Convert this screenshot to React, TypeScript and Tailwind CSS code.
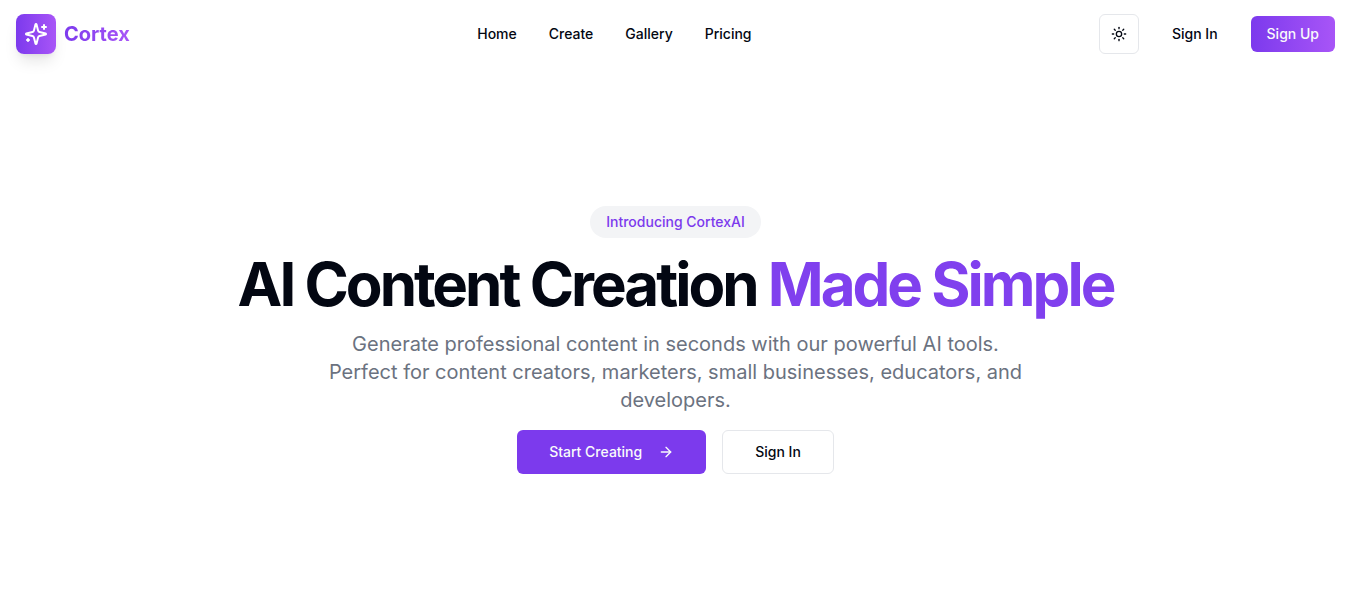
import { ArrowRight, Sun } from "lucide-react";

const links = ["Home", "Create", "Gallery", "Pricing"];

function SparklesIcon() {
  return (
    <svg
      viewBox="0 0 24 24"
      className="size-6"
      fill="none"
      stroke="currentColor"
      strokeWidth="2"
      strokeLinecap="round"
      strokeLinejoin="round"
      aria-hidden="true"
    >
      <path d="M9.937 15.5A2 2 0 0 0 8.5 14.063l-6.135-1.582a.5.5 0 0 1 0-.962L8.5 9.936A2 2 0 0 0 9.937 8.5l1.582-6.135a.5.5 0 0 1 .963 0L14.063 8.5A2 2 0 0 0 15.5 9.937l6.135 1.581a.5.5 0 0 1 0 .964L15.5 14.063a2 2 0 0 0-1.437 1.437l-1.582 6.135a.5.5 0 0 1-.963 0z" />
      <path d="M20 3v4" />
      <path d="M22 5h-4" />
      <path d="M4 17v2" />
      <path d="M5 18H3" />
    </svg>
  );
}

function Header() {
  return (
    <header className="flex h-[68px] items-center justify-between pl-4 pr-[13px]">
      <a href="#" className="flex items-center gap-2">
        <span className="flex size-10 items-center justify-center rounded-lg bg-linear-to-r/srgb from-[#7c3aed] to-[#a855f7] text-white shadow-lg">
          <SparklesIcon />
        </span>
        <span className="bg-linear-to-r/srgb from-[#7c3aed] to-[#a855f7] bg-clip-text text-xl font-bold text-transparent">
          Cortex
        </span>
      </a>
      <nav className="flex items-center gap-8 text-sm font-medium">
        {links.map((label) => (
          <a key={label} href="#">
            {label}
          </a>
        ))}
      </nav>
      <div className="flex items-center gap-4">
        <button
          type="button"
          aria-label="Toggle theme"
          className="flex size-10 items-center justify-center rounded-md border border-[#e5e7eb]"
        >
          <Sun className="size-4" />
        </button>
        <a href="#" className="rounded-md border border-transparent px-4 text-sm font-medium">
          Sign In
        </a>
        <button
          type="button"
          className="h-9 rounded-md bg-linear-to-r/srgb from-[#7c3aed] to-[#a855f7] px-4 text-sm font-medium text-gray-50"
        >
          Sign Up
        </button>
      </div>
    </header>
  );
}

export default function App() {
  return (
    <div className="min-h-screen bg-white font-['Inter',sans-serif] text-[#030712]">
      <Header />
      <main className="flex flex-col items-center pt-[138px] pr-4 pl-[19px] text-center">
        <p className="rounded-full bg-[#f3f4f6] px-4 py-1.5 text-sm font-medium text-[#7c3aed]">Introducing CortexAI</p>
        <h1 className="mt-4 text-6xl font-bold tracking-tighter">
          AI Content Creation <span className="text-[#8040ee]">Made Simple</span>
        </h1>
        <p className="mt-4 max-w-[700px] text-xl text-[#6b7280]">
          Generate professional content in seconds with our powerful AI tools. Perfect for content creators, marketers,
          small businesses, educators, and developers.
        </p>
        <div className="mt-4 flex gap-4">
          <a
            href="#"
            className="flex h-11 items-center gap-4 rounded-md bg-[#7c3aed] px-8 text-sm font-medium text-gray-50"
          >
            Start Creating
            <ArrowRight className="size-4" />
          </a>
          <a
            href="#"
            className="flex h-11 items-center rounded-md border border-[#e5e7eb] px-8 text-sm font-medium"
          >
            Sign In
          </a>
        </div>
      </main>
    </div>
  );
}
